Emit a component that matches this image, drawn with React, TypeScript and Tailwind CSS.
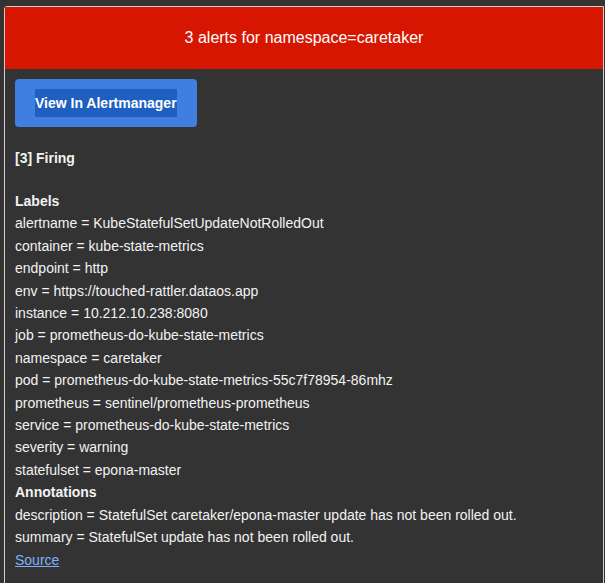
const labels: [string, string][] = [
  ['alertname', 'KubeStatefulSetUpdateNotRolledOut'],
  ['container', 'kube-state-metrics'],
  ['endpoint', 'http'],
  ['env', 'https://touched-rattler.dataos.app'],
  ['instance', '10.212.10.238:8080'],
  ['job', 'prometheus-do-kube-state-metrics'],
  ['namespace', 'caretaker'],
  ['pod', 'prometheus-do-kube-state-metrics-55c7f78954-86mhz'],
  ['prometheus', 'sentinel/prometheus-prometheus'],
  ['service', 'prometheus-do-kube-state-metrics'],
  ['severity', 'warning'],
  ['statefulset', 'epona-master'],
];

const annotations: [string, string][] = [
  ['description', 'StatefulSet caretaker/epona-master update has not been rolled out.'],
  ['summary', 'StatefulSet update has not been rolled out.'],
];

export default function App() {
  return (
    <div className="min-h-[583px] overflow-hidden bg-[#333333] pl-[4px] pt-[6px] font-['Liberation_Sans',Arial,sans-serif] text-[14px] leading-[22.4px] text-[#f2f2f2]">
      <div className="min-h-[600px] w-[600px] rounded-tl-[3px] border border-[#d0d0d0] bg-[#333333]">
        <div className="flex h-[62px] items-center justify-center pt-[1px] bg-[#d61600] text-[16px] text-white">
          3 alerts for namespace=caretaker
        </div>
        <div className="px-[10px] pt-[10px]">
          <a
            href="#"
            className="inline-block rounded-[4px] bg-[#3f7fdf] px-[20px] py-[10px] font-bold text-white"
          >
            <span className="inline-block bg-[#1f5fbf] leading-[28px]">View In Alertmanager</span>
          </a>
          <div className="mt-[20px] font-bold">[3] Firing</div>
          <div className="h-[20.6px]" />
          <div className="font-bold">Labels</div>
          {labels.map(([k, v]) => (
            <div key={k}>
              {k} = {v}
            </div>
          ))}
          <div className="font-bold">Annotations</div>
          {annotations.map(([k, v]) => (
            <div key={k}>
              {k} = {v}
            </div>
          ))}
          <a href="#" className="text-[#7fb0ff] underline">
            Source
          </a>
        </div>
      </div>
    </div>
  );
}
